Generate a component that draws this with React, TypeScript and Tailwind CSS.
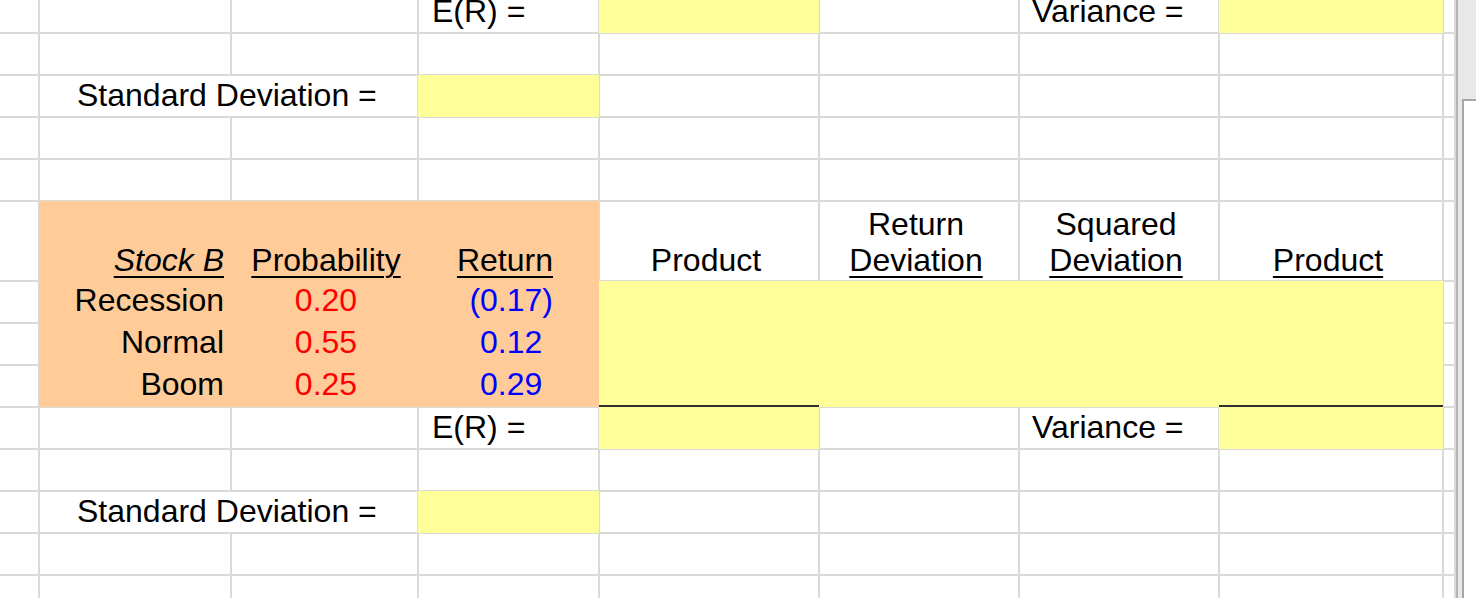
import React from "react";

const font = "font-['Liberation_Sans',Arial,Helvetica,sans-serif]";

// 15 rows x 9 cols = 135 cells; 42 of them are placed explicitly below
const blankCount = 93;

const scenarios = [
  { name: "Recession", prob: "0.20", ret: "(0.17)", neg: true },
  { name: "Normal", prob: "0.55", ret: "0.12", neg: false },
  { name: "Boom", prob: "0.25", ret: "0.29", neg: false },
];

function Label({ children, className = "" }: { children: React.ReactNode; className?: string }) {
  return (
    <div className={`bg-white flex items-end pb-[3px] leading-[36px] whitespace-nowrap ${className}`}>
      {children}
    </div>
  );
}

function HeaderCell({
  top,
  bottom,
  underline,
  className = "",
}: {
  top?: string;
  bottom: string;
  underline?: boolean;
  className?: string;
}) {
  return (
    <div className={`bg-white row-start-6 flex flex-col items-center justify-end pb-[2px] pr-[6px] leading-[36px] ${className}`}>
      {top && <span>{top}</span>}
      <span className={underline ? "underline decoration-2 underline-offset-[5px]" : ""}>{bottom}</span>
    </div>
  );
}

export default function App() {
  return (
    <div className={`w-[1476px] h-[598px] overflow-hidden flex bg-white text-black text-[32px] ${font}`}>
      {/* sheet */}
      <div className="w-[1456px] h-full overflow-hidden">
        <div className="-mt-[8px] pr-[2px] bg-[#dadada] grid gap-[2px] grid-cols-[38px_190px_185px_179px_218px_198px_198px_222px_10px] grid-rows-[40px_40px_40px_40px_40px_78px_40px_40px_40px_40px_40px_40px_40px_40px_40px]">
          {Array.from({ length: blankCount }).map((_, i) => (
            <div key={i} className="bg-white" />
          ))}

          {/* top block (scrolled, cut off) */}
          <Label className="col-start-4 row-start-1 pl-[13px]">E(R) =</Label>
          <div className="col-start-5 row-start-1 -m-[1px] bg-[#ffff99]" />
          <Label className="col-start-7 row-start-1 pl-[12px]">Variance =</Label>
          <div className="col-start-8 row-start-1 -m-[1px] bg-[#ffff99]" />

          <Label className="col-start-2 col-span-2 row-start-3 pl-[37px]">Standard Deviation =</Label>
          <div className="col-start-4 row-start-3 -m-[1px] bg-[#ffff99]" />

          {/* Stock B inputs */}
          <div className="col-start-2 col-span-3 row-start-6 row-span-4 -m-[1px] bg-[#ffcc99] grid grid-cols-[191px_189px_180px] grid-rows-[80px_42px_42px_42px] leading-[36px]">
            <div className="flex items-end justify-end pr-[6px] pb-[3px]">
              <span className="italic underline decoration-2 underline-offset-[5px]">Stock B</span>
            </div>
            <div className="flex items-end justify-center pl-[3px] pb-[3px]">
              <span className="underline decoration-2 underline-offset-[5px]">Probability</span>
            </div>
            <div className="flex items-end justify-end pr-[46px] pb-[3px]">
              <span className="underline decoration-2 underline-offset-[5px]">Return</span>
            </div>
            {scenarios.map((s) => (
              <React.Fragment key={s.name}>
                <div className="flex items-end justify-end pr-[6px] pb-[5px]">{s.name}</div>
                <div className="flex items-end justify-center pl-[3px] pb-[5px] text-[#ff0000]">{s.prob}</div>
                <div className="flex items-end justify-end pr-[46px] pb-[5px] text-[#0000ff]">
                  {s.ret}
                  {!s.neg && <span className="invisible">)</span>}
                </div>
              </React.Fragment>
            ))}
          </div>

          <HeaderCell className="col-start-5" bottom="Product" />
          <HeaderCell className="col-start-6" top="Return" bottom="Deviation" underline />
          <HeaderCell className="col-start-7" top="Squared" bottom="Deviation" underline />
          <HeaderCell className="col-start-8" bottom="Product" underline />

          <div className="col-start-5 col-span-4 row-start-7 row-span-3 -m-[1px] bg-[#ffff99]" />

          {/* results */}
          <Label className="col-start-4 row-start-10 pl-[13px]">E(R) =</Label>
          <div className="col-start-5 row-start-10 -mt-[3px] -mx-[1px] -mb-[1px] bg-[#ffff99] border-t-2 border-[#2e2e2e]" />
          <Label className="col-start-7 row-start-10 pl-[12px]">Variance =</Label>
          <div className="col-start-8 row-start-10 -mt-[3px] -mx-[1px] -mb-[1px] bg-[#ffff99] border-t-2 border-[#2e2e2e]" />

          <Label className="col-start-2 col-span-2 row-start-12 pl-[37px]">Standard Deviation =</Label>
          <div className="col-start-4 row-start-12 -m-[1px] bg-[#ffff99]" />
        </div>
      </div>

      {/* vertical scrollbar */}
      <div className="w-[20px] h-full border-l-2 border-[#b4b4b4] bg-[#e8e8e8] flex flex-col">
        <div className="h-[99px] shrink-0" />
        <div className="ml-[4px] flex-1 bg-white border-l-2 border-t-2 border-[#a6a6a6]" />
      </div>
    </div>
  );
}
